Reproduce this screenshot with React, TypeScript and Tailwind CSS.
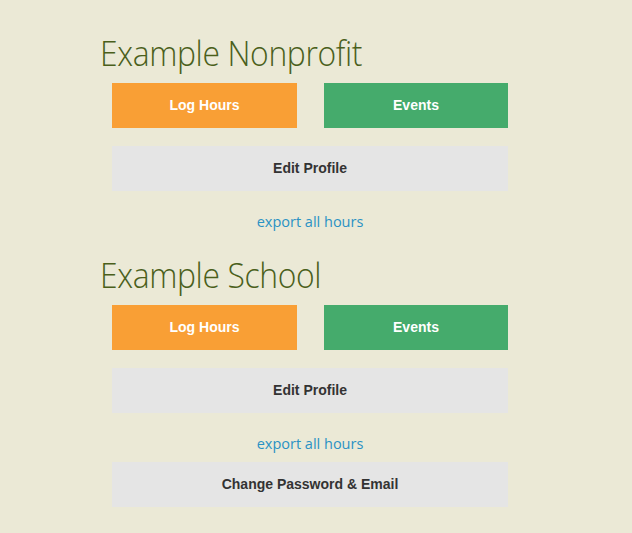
import React from "react";

function Section({ title, extra }: { title: string; extra?: boolean }) {
  return (
    <div>
      <h1 className="text-[35px] leading-[40px] font-light text-[#4a5f1b] font-['Open_Sans',sans-serif] tracking-[-0.4px] origin-left scale-x-[0.91] whitespace-nowrap">
        {title}
      </h1>
      <div className="px-3 mt-[10px]">
        <div className="flex gap-[27px]">
          <button className="w-[185px] h-[45px] bg-[#f99f35] text-white font-bold text-[14px] font-['Liberation_Sans',Arial,sans-serif]">
            Log Hours
          </button>
          <button className="w-[184px] h-[45px] bg-[#45ab6c] text-white font-bold text-[14px] font-['Liberation_Sans',Arial,sans-serif]">
            Events
          </button>
        </div>
        <button className="mt-[18px] w-[396px] h-[45px] bg-[#e5e5e5] text-[#333333] font-bold text-[14px] font-['Liberation_Sans',Arial,sans-serif]">
          Edit Profile
        </button>
        <div className="mt-[21px] text-center leading-[20px] text-[14.5px] text-[#2a92c4] font-['Open_Sans',sans-serif]">
          export all hours
        </div>
        {extra && (
          <button className="mt-[8px] w-[396px] h-[45px] bg-[#e5e5e5] text-[#333333] font-bold text-[14px] font-['Liberation_Sans',Arial,sans-serif]">
            Change Password &amp; Email
          </button>
        )}
      </div>
    </div>
  );
}

export default function App() {
  return (
    <div className="w-[632px] h-[533px] bg-[#ebe9d6] overflow-hidden">
      <div className="ml-[100px] w-[420px] pt-[33px]">
        <Section title="Example Nonprofit" />
        <div className="h-[23px]" />
        <Section title="Example School" extra />
      </div>
    </div>
  );
}
